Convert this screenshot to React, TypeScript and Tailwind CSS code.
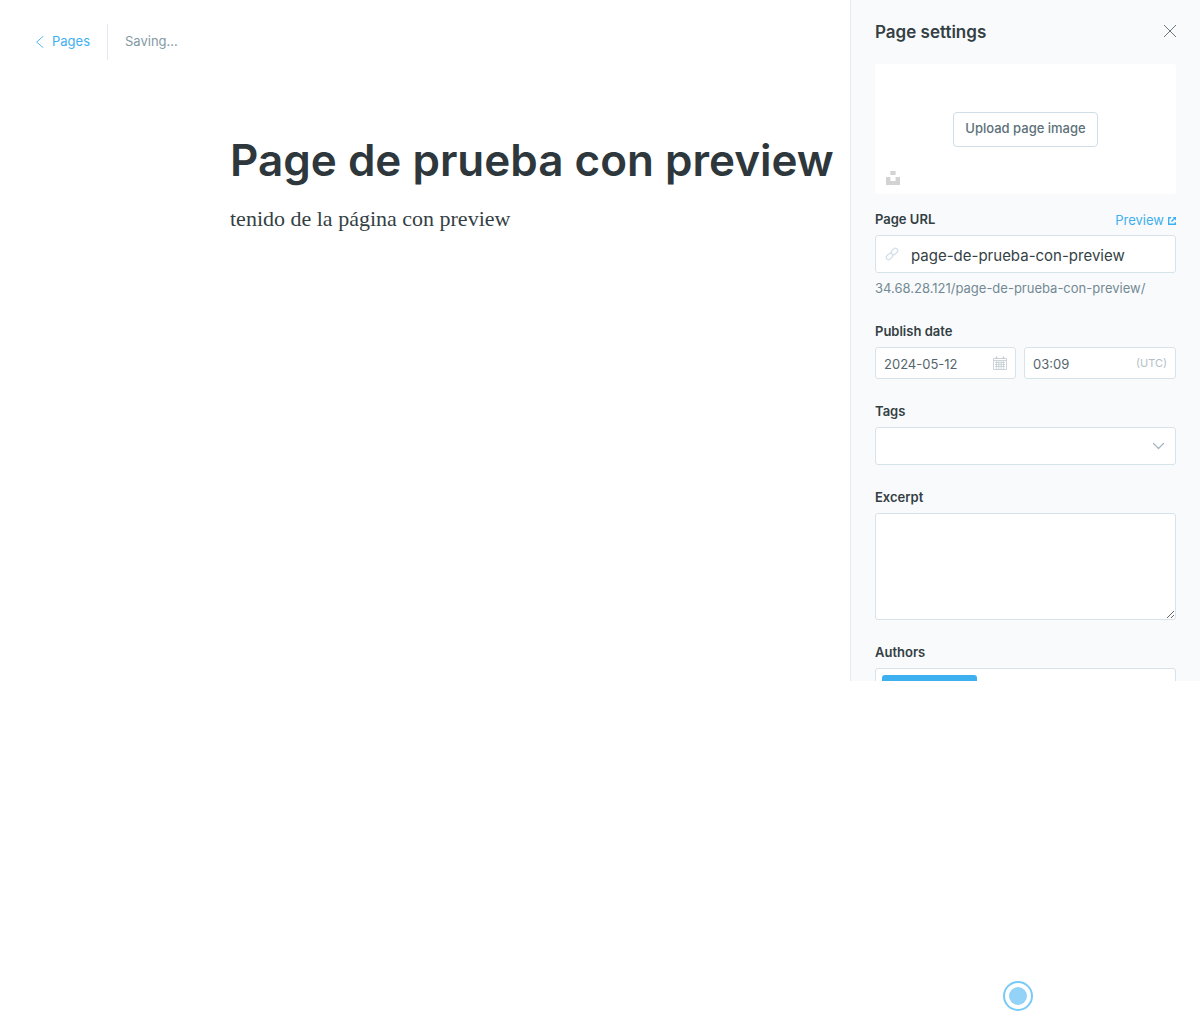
import type { ReactNode } from "react";

const label = "block h-5 text-[13px] leading-5 font-semibold text-[#343f44]";
const box = "w-full rounded-[3px] border border-[#d6e3eb] bg-white outline-none";

function Field({ id, title, aside, children }: { id: string; title: string; aside?: ReactNode; children: ReactNode }) {
  return (
    <div>
      <div className="mb-1.5 flex items-center justify-between">
        <label htmlFor={id} className={label}>
          {title}
        </label>
        {aside}
      </div>
      {children}
    </div>
  );
}

function ChevronLeft() {
  return (
    <svg width="8" height="12" viewBox="0 0 8 12" fill="none" stroke="currentColor" strokeWidth="0.9" strokeLinecap="round" strokeLinejoin="round" aria-hidden="true">
      <path d="M7 .5.6 6 7 11.500" />
    </svg>
  );
}

function CloseIcon() {
  return (
    <svg width="14" height="14" viewBox="0 0 14 14" fill="none" stroke="currentColor" aria-hidden="true">
      <path d="m1 1 12 12M13 1 1 13" />
    </svg>
  );
}

function UnsplashIcon() {
  return (
    <svg width="14" height="14" viewBox="0 0 14 14" fill="#d3d3d3" aria-hidden="true">
      <path d="M4.4 0h5.2v4H4.4zM9.6 6H14v8H0V6h4.4v4h5.2z" />
    </svg>
  );
}

function LinkIcon() {
  return (
    <svg width="14" height="14" viewBox="0 0 14 14" fill="none" stroke="#d3e0e8" strokeWidth="1.2" aria-hidden="true">
      <rect x="-3.600" y="-2.300" width="7.200" height="4.600" rx="2.300" transform="translate(9.500 4.500) rotate(-45)" />
      <rect x="-3.600" y="-2.300" width="7.200" height="4.600" rx="2.300" transform="translate(4.500 9.500) rotate(-45)" />
    </svg>
  );
}

function ExternalIcon() {
  return (
    <svg width="8" height="8" viewBox="0 0 8 8" fill="none" stroke="currentColor" strokeWidth="1.4" aria-hidden="true">
      <path d="M3.200.8H.7v6.500h6.600V5.200M3.400 4.600 6.800 1.200" />
      <path d="M4.600 0H8v3.400z" fill="currentColor" stroke="none" />
    </svg>
  );
}

function CalendarIcon() {
  return (
    <svg width="14" height="14" viewBox="0 0 14 14" fill="none" stroke="#bfc9cf" strokeWidth="0.8" aria-hidden="true">
      <path d="M.5 2.500h13v11H.5zM.5 4.500h13" />
      <path d="M3.500.5v2.500M10.500.5v2.500" strokeWidth="1.400" />
      <path d="M3.500 5v8M5.800 5v8M8.200 5v8M10.500 5v8M2 6.500h10M2 8.500h10M2 10.500h10" strokeWidth="0.700" />
    </svg>
  );
}

function ChevronDown() {
  return (
    <svg width="12" height="8" viewBox="0 0 12 8" fill="none" stroke="#a6b5bd" strokeWidth="1.2" strokeLinecap="round" strokeLinejoin="round" aria-hidden="true">
      <path d="m1.500 1.500 5 5 5-5" />
    </svg>
  );
}

function Editor() {
  return (
    <main className="min-w-0 flex-1 overflow-hidden">
      <header className="flex h-[84px] items-center pl-9">
        <a href="#pages" className="flex items-center gap-2 text-[13px] text-[#3eb0ef]">
          <ChevronLeft />
          Pages
        </a>
        <span className="ml-[17px] h-9 w-px bg-[#dfe9ef]" />
        <span className="ml-[17px] text-[13px] text-[#839aa4]">Saving...</span>
      </header>
      <article className="ml-[230px] pt-12">
        <h1 className="text-[44px] leading-[56px] font-semibold whitespace-nowrap text-[#2d373c]">Page de prueba con preview</h1>
        <p className="mt-[15px] font-['Liberation_Serif',serif] text-[22px] leading-8 text-[#343f44]">tenido de la página con preview</p>
      </article>
    </main>
  );
}

function SettingsPanel() {
  return (
    <aside className="w-[350px] shrink-0 overflow-hidden border-l border-[#e3edf3] bg-[#f9fafc] px-6">
      <div className="flex h-16 items-center justify-between">
        <h2 className="text-[17px] leading-6 font-semibold text-[#343f44]">Page settings</h2>
        <button type="button" aria-label="Close" className="-mr-px pb-0.5 text-[#6b777d]">
          <CloseIcon />
        </button>
      </div>
      <div className="relative mb-[15px] flex h-[130px] items-center justify-center rounded-[3px] bg-white">
        <button type="button" className="h-[35px] rounded-[4px] border border-[#d0dde5] px-[11px] text-[13px] font-medium text-[#5d7179]">
          Upload page image
        </button>
        <button type="button" aria-label="Search Unsplash" className="absolute bottom-[9px] left-[11px]">
          <UnsplashIcon />
        </button>
      </div>
      <div className="flex flex-col gap-[22px]">
        <Field
          id="url"
          title="Page URL"
          aside={
            <a href="#preview" className="flex h-5 items-center gap-1 pt-1 text-[13px] text-[#3eb0ef]">
              Preview
              <ExternalIcon />
            </a>
          }
        >
          <div className={`${box} flex h-[38px] items-center gap-3 px-[9px]`}>
            <LinkIcon />
            <input id="url" defaultValue="page-de-prueba-con-preview" className="h-full min-w-0 flex-1 pt-0.5 text-[15px] text-[#343f44] outline-none" />
          </div>
          <p className="mt-1 text-[13px] leading-[22px] text-[#738a94]">34.68.28.121/page-de-prueba-con-preview/</p>
        </Field>
        <Field id="date" title="Publish date">
          <div className="flex gap-2">
            <div className="flex h-8 w-[141px] items-center rounded-[3px] border border-[#d6e3eb] bg-white px-2">
              <input id="date" defaultValue="2024-05-12" className="h-full min-w-0 flex-1 pt-0.5 text-[13px] text-[#54666d] outline-none" />
              <CalendarIcon />
            </div>
            <div className="flex h-8 min-w-0 flex-1 items-center rounded-[3px] border border-[#d6e3eb] bg-white px-2">
              <input aria-label="Publish time" defaultValue="03:09" className="h-full min-w-0 flex-1 pt-0.5 text-[13px] text-[#54666d] outline-none" />
              <span className="text-[11px] text-[#b3c0c7]">(UTC)</span>
            </div>
          </div>
        </Field>
        <Field id="tags" title="Tags">
          <div className="relative">
            <select id="tags" className={`${box} block h-[38px] appearance-none px-3`} />
            <span className="pointer-events-none absolute top-[15px] right-3">
              <ChevronDown />
            </span>
          </div>
        </Field>
        <Field id="excerpt" title="Excerpt">
          <textarea id="excerpt" className={`${box} block h-[107px] resize-y px-3 py-2`} />
        </Field>
        <Field id="authors" title="Authors">
          <div className={`${box} flex h-[38px] items-center gap-2 px-1.5`}>
            <span className="h-6 w-[95px] rounded-[3px] bg-[#3eb0ef]" />
            <input id="authors" className="min-w-0 flex-1 outline-none" />
          </div>
        </Field>
      </div>
    </aside>
  );
}

export default function App() {
  return (
    <div className="relative h-screen bg-white font-[Inter,sans-serif]">
      <div className="flex h-[66.7vh]">
        <Editor />
        <SettingsPanel />
      </div>
      <button type="button" aria-label="Help" className="absolute right-[167px] bottom-2.5 flex size-[30px] items-center justify-center rounded-full border-2 border-[#78cbf5] bg-white">
        <span className="size-[18px] rounded-full bg-[#93d3f7]" />
      </button>
    </div>
  );
}
